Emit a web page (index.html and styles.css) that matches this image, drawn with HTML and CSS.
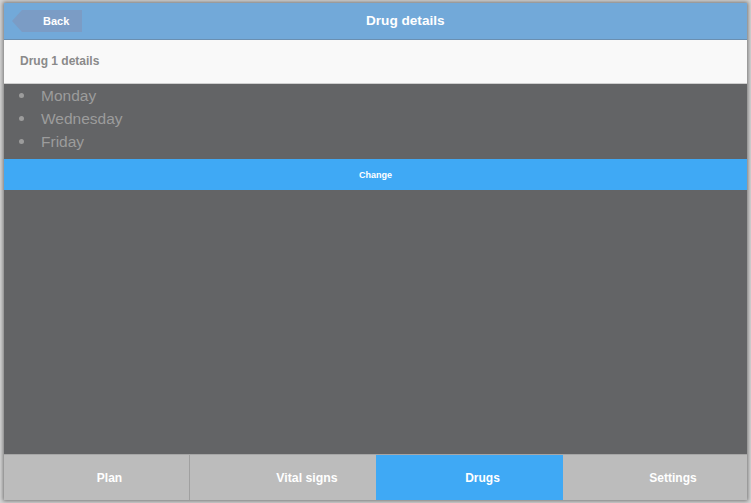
FILE: index.html
```html
<!DOCTYPE html>
<html>
<head>
<meta charset="utf-8">
<link rel="stylesheet" href="styles.css">
</head>
<body>
<div class="app">
  <header class="topbar">
    <div class="back"><span class="back-arrow"></span><span class="back-body">Back</span></div>
    <h1 class="title">Drug details</h1>
  </header>
  <div class="subhead">Drug 1 details</div>
  <main class="content">
    <ul class="days">
      <li>Monday</li>
      <li>Wednesday</li>
      <li class="fri">Friday</li>
    </ul>
    <button class="change">Change</button>
  </main>
  <nav class="tabs">
    <div class="tab t1">Plan</div>
    <div class="tab t2">Vital signs</div>
    <div class="tab t3 active">Drugs</div>
    <div class="tab t4">Settings</div>
  </nav>
</div>
</body>
</html>
```
FILE: styles.css
```css
html, body {
  margin: 0;
  padding: 0;
  width: 751px;
  height: 503px;
  overflow: hidden;
  background: #d4d4d4;
  font-family: "Liberation Sans", Arial, sans-serif;
}
.app {
  margin: 3px 4px;
  width: 743px;
  height: 497px;
  display: flex;
  flex-direction: column;
  background: #636466;
  box-shadow: 0 0 4px 1px rgba(0,0,0,0.45);
}
.topbar {
  height: 36px;
  background: #72a9d9;
  border-bottom: 1px solid #6b8fb0;
  display: flex;
  align-items: center;
}
.back {
  margin-left: 8px;
  display: flex;
  align-items: center;
  height: 22px;
  margin-top: -1px;
}
.back-arrow {
  width: 0;
  height: 0;
  border-top: 11px solid transparent;
  border-bottom: 11px solid transparent;
  border-right: 10px solid #7b9cc5;
}
.back-body {
  background: #7b9cc5;
  height: 22px;
  width: 60px;
  color: #fff;
  font-weight: bold;
  font-size: 11px;
  line-height: 23px;
  padding-left: 21px;
  box-sizing: border-box;
}
.title {
  margin: 0 0 0 284px;
  font-size: 13.6px;
  font-weight: bold;
  color: #fff;
  line-height: 16px;
  margin-top: -1px;
}
.subhead {
  background: #f9f9f9;
  border-bottom: 1px solid #cfcfcf;
  box-sizing: border-box;
  height: 44px;
  padding-left: 16px;
  font-size: 12px;
  font-weight: bold;
  color: #8a8a8a;
  line-height: 42px;
}
.content {
  flex: 1;
  display: flex;
  flex-direction: column;
}
.days {
  margin: 0;
  padding: 0;
  list-style: none;
}
.days li {
  display: flex;
  align-items: center;
  height: 23px;
  font-size: 15.5px;
  color: #9c9c9c;
}
.days li::before {
  content: "";
  width: 5px;
  height: 5px;
  border-radius: 50%;
  background: #9c9c9c;
  margin-left: 15px;
  margin-right: 17px;
}
.days li.fri {
  padding-left: 1px;
}
.days li.fri::before {
  margin-left: 14px;
}
.change {
  margin-top: 6px;
  height: 31px;
  border: 0;
  background: #3fa9f5;
  color: #fff;
  font-family: "Liberation Sans", Arial, sans-serif;
  font-size: 9px;
  font-weight: bold;
  padding: 0;
}
.tabs {
  height: 46px;
  display: flex;
  background: #bcbcbc;
  border-top: 1px solid #a6a6a6;
  box-sizing: border-box;
}
.tab {
  height: 100%;
  display: flex;
  align-items: center;
  justify-content: center;
  color: #fff;
  font-weight: bold;
  font-size: 12px;
  box-sizing: border-box;
}
.t1 { width: 186px; padding-left: 26px; border-right: 1px solid #a0a0a0; }
.t2 { width: 186px; padding-left: 48px; font-size: 12.3px; }
.t3 { width: 187px; padding-left: 26px; }
.t4 { width: 184px; padding-left: 36px; }
.tab.active { background: #3fa9f5; }
```
